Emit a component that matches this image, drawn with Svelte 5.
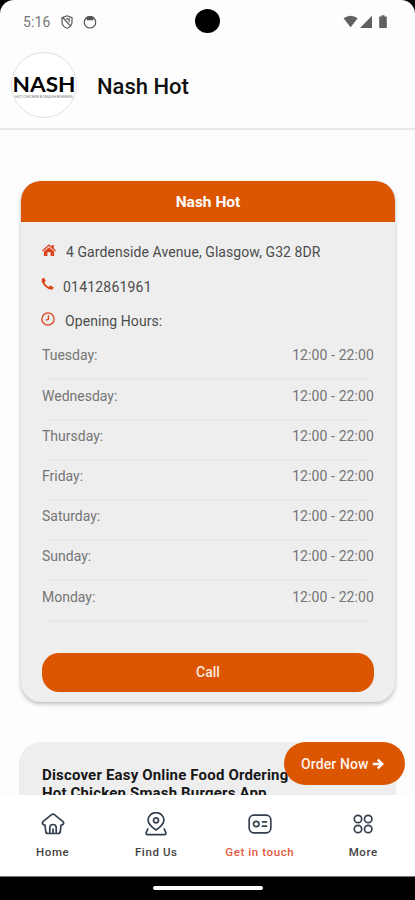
<script lang="ts">
	const hours = [
		{ day: 'Tuesday', time: '12:00 - 22:00' },
		{ day: 'Wednesday', time: '12:00 - 22:00' },
		{ day: 'Thursday', time: '12:00 - 22:00' },
		{ day: 'Friday', time: '12:00 - 22:00' },
		{ day: 'Saturday', time: '12:00 - 22:00' },
		{ day: 'Sunday', time: '12:00 - 22:00' },
		{ day: 'Monday', time: '12:00 - 22:00' }
	];

	const tabs = [
		{ id: 'home', label: 'Home' },
		{ id: 'find', label: 'Find Us' },
		{ id: 'contact', label: 'Get in touch' },
		{ id: 'more', label: 'More' }
	];

	let active = $state('contact');
</script>

<div class="device">
	<div class="screen">
		<div class="status">
			<span class="clock">5:16</span>
			<svg class="shield" viewBox="0 0 12 14" aria-hidden="true">
				<path d="M6 .8 11 2.600V7c0 3-2.200 5.200-5 6.200C3.200 12.200 1 10 1 7V2.600Z M2.200 3 9.600 11.200 M5 3.800h3.200v3.400" />
			</svg>
			<svg class="face" viewBox="0 0 14 14" aria-hidden="true">
				<circle cx="7" cy="7.300" r="5.700" />
				<path d="M2.600 2.400Q7-.5 11.400 2.400L9.800 5.200H4.200Z" />
			</svg>
			<svg class="signals" viewBox="0 0 46 14" aria-hidden="true">
				<path d="M.5 3.300Q7.500-1.800 14.700 3.300L7.600 12.300Z" />
				<path d="M29 .8V13H17Z" />
				<path d="M38.500 1.500V.3h3v1.200h2.300V13h-7.600V1.500Z" />
			</svg>
			<span class="camera"></span>
		</div>

		<header>
			<div class="logo">
				<svg viewBox="0 0 66 66" role="img" aria-label="Nash">
					<circle cx="33" cy="33" r="32.500" />
					<text class="wordmark" x="1.500" y="40" textLength="63" lengthAdjust="spacingAndGlyphs">NASH</text>
					<text class="strap" x="4" y="45.800" textLength="58" lengthAdjust="spacingAndGlyphs">HOT CHICKEN &amp; SMASH BURGERS</text>
				</svg>
			</div>
			<h1>Nash Hot</h1>
		</header>

		<main>
			<section class="card">
				<h2>Nash Hot</h2>
				<div class="body">
					<p class="line address">
						<svg viewBox="0 0 14 14" aria-hidden="true">
							<path class="solid" d="M7 1.300 9.800 3.800V2h2v3.600L14 7.500l-.8.9L7 3.100.8 8.400 0 7.500Z M7 4.200l5.100 4.300V13H8.600V9.300H5.400V13H1.900V8.500Z" />
						</svg>
						<span>4 Gardenside Avenue, Glasgow, G32 8DR</span>
					</p>
					<p class="line phone">
						<svg viewBox="0 0 14 14" aria-hidden="true">
							<path class="solid" d="M.9 1.300 3.400.4 5.100 3.900 3.700 5.400C4.600 7.600 6 9 8.300 10.100l1.500-1.500 3.700 1.700-.7 2.300c-2 1-5 .1-7.800-2.400C1.800 7.300.1 4 .9 1.300Z" />
						</svg>
						<span>01412861961</span>
					</p>
					<p class="line opening">
						<svg viewBox="0 0 14 14" aria-hidden="true">
							<circle cx="7" cy="7" r="6.100" />
							<path d="M7.400 3.200V7.300L4.800 8.200" />
						</svg>
						<span>Opening Hours:</span>
					</p>
					<ul>
						{#each hours as row}
							<li><span>{row.day}:</span><span class="time">{row.time}</span></li>
						{/each}
					</ul>
					<button class="call">Call</button>
				</div>
			</section>

			<section class="promo">
				<h3>Discover Easy Online Food Ordering<br />Hot Chicken Smash Burgers App</h3>
			</section>

			<button class="order">
				<span>Order Now</span>
				<svg viewBox="0 0 12 12" aria-hidden="true"><path d="M.8 6h9.400M5.800 1.600 10.200 6l-4.400 4.400" /></svg>
			</button>
		</main>

		<nav>
			{#each tabs as tab}
				<button class:active={active === tab.id} onclick={() => (active = tab.id)}>
					<svg viewBox="0 0 24 24" aria-hidden="true">
						{#if tab.id === 'home'}
							<path d="M1.700 12Q.8 10.600 2.300 9.300L10.600 2.700Q12 1.600 13.400 2.700L21.700 9.300Q23.200 10.600 22.300 12Q21.500 13.200 20 13L19.300 19.500Q19 21.500 17 21.500H7Q5 21.500 4.700 19.500L4 13Q2.500 13.200 1.700 12Z M8.800 21.300V15.500Q8.800 12.500 12 12.500T15.200 15.500V21.300M12 17V21.300" />
						{:else if tab.id === 'find'}
							<path d="M12 18C7.500 15 4.100 11.600 4.100 8a7.900 7.400 0 0 1 15.800 0c0 3.600-3.400 7-7.900 10Z M3.800 17 2.300 20.300Q1.600 22.700 3.600 22.700H20.400Q22.400 22.700 21.700 20.300L20.200 17" />
							<circle cx="12" cy="8.300" r="2.500" />
						{:else if tab.id === 'contact'}
							<rect x="1.200" y="3.200" width="21.600" height="17.600" rx="4.500" />
							<circle cx="8.200" cy="12" r="2.700" />
							<path d="M14.500 9.800h4M14.500 14.200h4" />
						{:else}
							<circle cx="7" cy="7" r="3.700" />
							<circle cx="17.200" cy="7" r="3.700" />
							<circle cx="7" cy="17" r="3.700" />
							<circle cx="17.200" cy="17" r="3.700" />
						{/if}
					</svg>
					<span>{tab.label}</span>
				</button>
			{/each}
		</nav>
	</div>
	<div class="gesture"><span></span></div>
</div>

<style>
	:global(body) {
		margin: 0;
		background: #000;
	}
	.device {
		width: 415px;
		height: 900px;
		display: flex;
		flex-direction: column;
		overflow: hidden;
		background: #000;
		font-family: Roboto, 'Liberation Sans', sans-serif;
	}
	.device * {
		box-sizing: border-box;
	}
	button {
		border: 0;
		padding: 0;
		font-family: inherit;
		cursor: pointer;
	}
	.screen {
		height: 876px;
		display: flex;
		flex-direction: column;
		overflow: hidden;
		background: #fdfdfd;
		border-radius: 14px 14px 0 0;
	}
	.status {
		position: relative;
		height: 43px;
		flex: none;
		display: flex;
		align-items: center;
		padding: 0 26px 0 23px;
		color: #777;
	}
	.clock {
		width: 38px;
		font-size: 14px;
		letter-spacing: 0.15px;
		line-height: 20px;
		padding-top: 1px;
	}
	.status svg {
		fill: none;
		stroke: #555;
		stroke-width: 1.2;
	}
	.shield {
		width: 12px;
		height: 14px;
	}
	.face {
		width: 14px;
		height: 14px;
		margin-left: 10px;
	}
	.status .face path {
		fill: #555;
		stroke: none;
	}
	.status .signals {
		width: 46px;
		height: 14px;
		margin-left: auto;
		fill: #606060;
		stroke: none;
	}
	.camera {
		position: absolute;
		left: 195px;
		top: 9px;
		width: 25px;
		height: 24px;
		border-radius: 50%;
		background: #000;
	}
	header {
		height: 87px;
		flex: none;
		display: flex;
		align-items: center;
		gap: 20px;
		padding: 0 11px 1px;
		border-bottom: 2px solid #e8e8e8;
	}
	.logo {
		width: 66px;
		height: 66px;
	}
	.logo svg {
		display: block;
		width: 66px;
		height: 66px;
		overflow: visible;
	}
	.logo circle {
		fill: #fff;
		stroke: #e1e1e1;
	}
	.wordmark {
		font: 700 20px Lato, sans-serif;
	}
	.strap {
		font-size: 3.5px;
		fill: #777;
	}
	h1 {
		margin: 2px 0 0;
		font-size: 22px;
		font-weight: 500;
		color: #111;
	}
	main {
		position: relative;
		flex: 1;
		min-height: 0;
		overflow: hidden;
		padding: 51px 20px 0 21px;
	}
	.card {
		height: 521px;
		width: 374px;
		border-radius: 20px;
		background: #eee;
		overflow: hidden;
		box-shadow: 0 2px 4px rgba(0, 0, 0, 0.27);
	}
	h2 {
		margin: 0;
		height: 41px;
		background: #dc5500;
		color: #fff;
		font-size: 15.5px;
		font-weight: 700;
		line-height: 43px;
		text-align: center;
	}
	.body {
		padding: 13px 21px 0;
	}
	.line {
		display: flex;
		margin: 0;
		height: 34px;
		line-height: 35px;
		font-size: 14px;
		color: #4c4c4c;
	}
	.line svg {
		width: 14px;
		height: 14px;
		margin-top: 8px;
		fill: none;
		stroke: #dc431b;
		stroke-width: 1.3;
	}
	.line .solid {
		fill: #dc431b;
		stroke: none;
	}
	.line span {
		margin-left: 10px;
		letter-spacing: 0.08px;
	}
	.line.phone {
		line-height: 36px;
	}
	.phone svg {
		width: 13px;
		height: 14px;
		margin-left: -1px;
	}
	.phone span {
		margin-left: 9px;
		letter-spacing: 0.2px;
	}
	.line.opening {
		line-height: 37px;
	}
	.opening svg {
		margin-left: -1px;
		margin-top: 9px;
	}
	ul {
		list-style: none;
		margin: 0;
		padding: 0.4px 0 0;
	}
	li {
		position: relative;
		display: flex;
		justify-content: space-between;
		height: 40.2px;
		line-height: 36px;
		font-size: 14px;
		color: #757575;
	}
	li::after {
		content: '';
		position: absolute;
		left: 7px;
		right: 5px;
		top: 41px;
		height: 2px;
		background: #e7e7e7;
	}
	.time {
		letter-spacing: 0.1px;
	}
	.call {
		width: 332px;
		height: 39px;
		margin-top: 34px;
		border-radius: 17px;
		background: #dc5500;
		color: #fbe9df;
		font-size: 14px;
		font-weight: 500;
	}
	.promo {
		width: 377px;
		height: 100px;
		margin: 40px 0 0 -2px;
		padding: 24px 0 0 23px;
		border-radius: 22px;
		background: #eee;
	}
	h3 {
		margin: 0;
		white-space: nowrap;
		font-size: 15px;
		font-weight: 700;
		letter-spacing: 0.17px;
		line-height: 18px;
		color: #171717;
	}
	.order {
		position: absolute;
		left: 284px;
		top: 612px;
		width: 121px;
		height: 43px;
		display: flex;
		align-items: center;
		gap: 4px;
		padding: 1px 0 0 17px;
		border-radius: 22px;
		background: #dc5500;
		color: #fff3ec;
		font-size: 14px;
		font-weight: 500;
		letter-spacing: 0.1px;
	}
	.order svg {
		width: 12px;
		height: 12px;
		fill: none;
		stroke: #fff;
		stroke-width: 2.4;
	}
	nav {
		height: 81px;
		flex: none;
		display: grid;
		grid-template-columns: repeat(4, 1fr);
		padding-left: 1px;
		background: #fff;
	}
	nav button {
		display: flex;
		flex-direction: column;
		align-items: center;
		padding-top: 17px;
		background: none;
		color: #444;
		font-size: 11.5px;
		font-weight: 500;
		letter-spacing: 0.6px;
	}
	nav svg {
		width: 24px;
		height: 24px;
		fill: none;
		stroke: #333f4f;
		stroke-width: 1.7;
		stroke-linecap: round;
		stroke-linejoin: round;
	}
	nav span {
		margin-top: 9px;
		line-height: 14px;
	}
	nav .active {
		color: #e15a3c;
	}
	.gesture {
		height: 24px;
		display: flex;
		justify-content: center;
		padding-top: 9px;
		border-top: 1px solid #777;
	}
	.gesture span {
		width: 110px;
		height: 4px;
		border-radius: 2px;
		background: #fff;
	}
</style>
